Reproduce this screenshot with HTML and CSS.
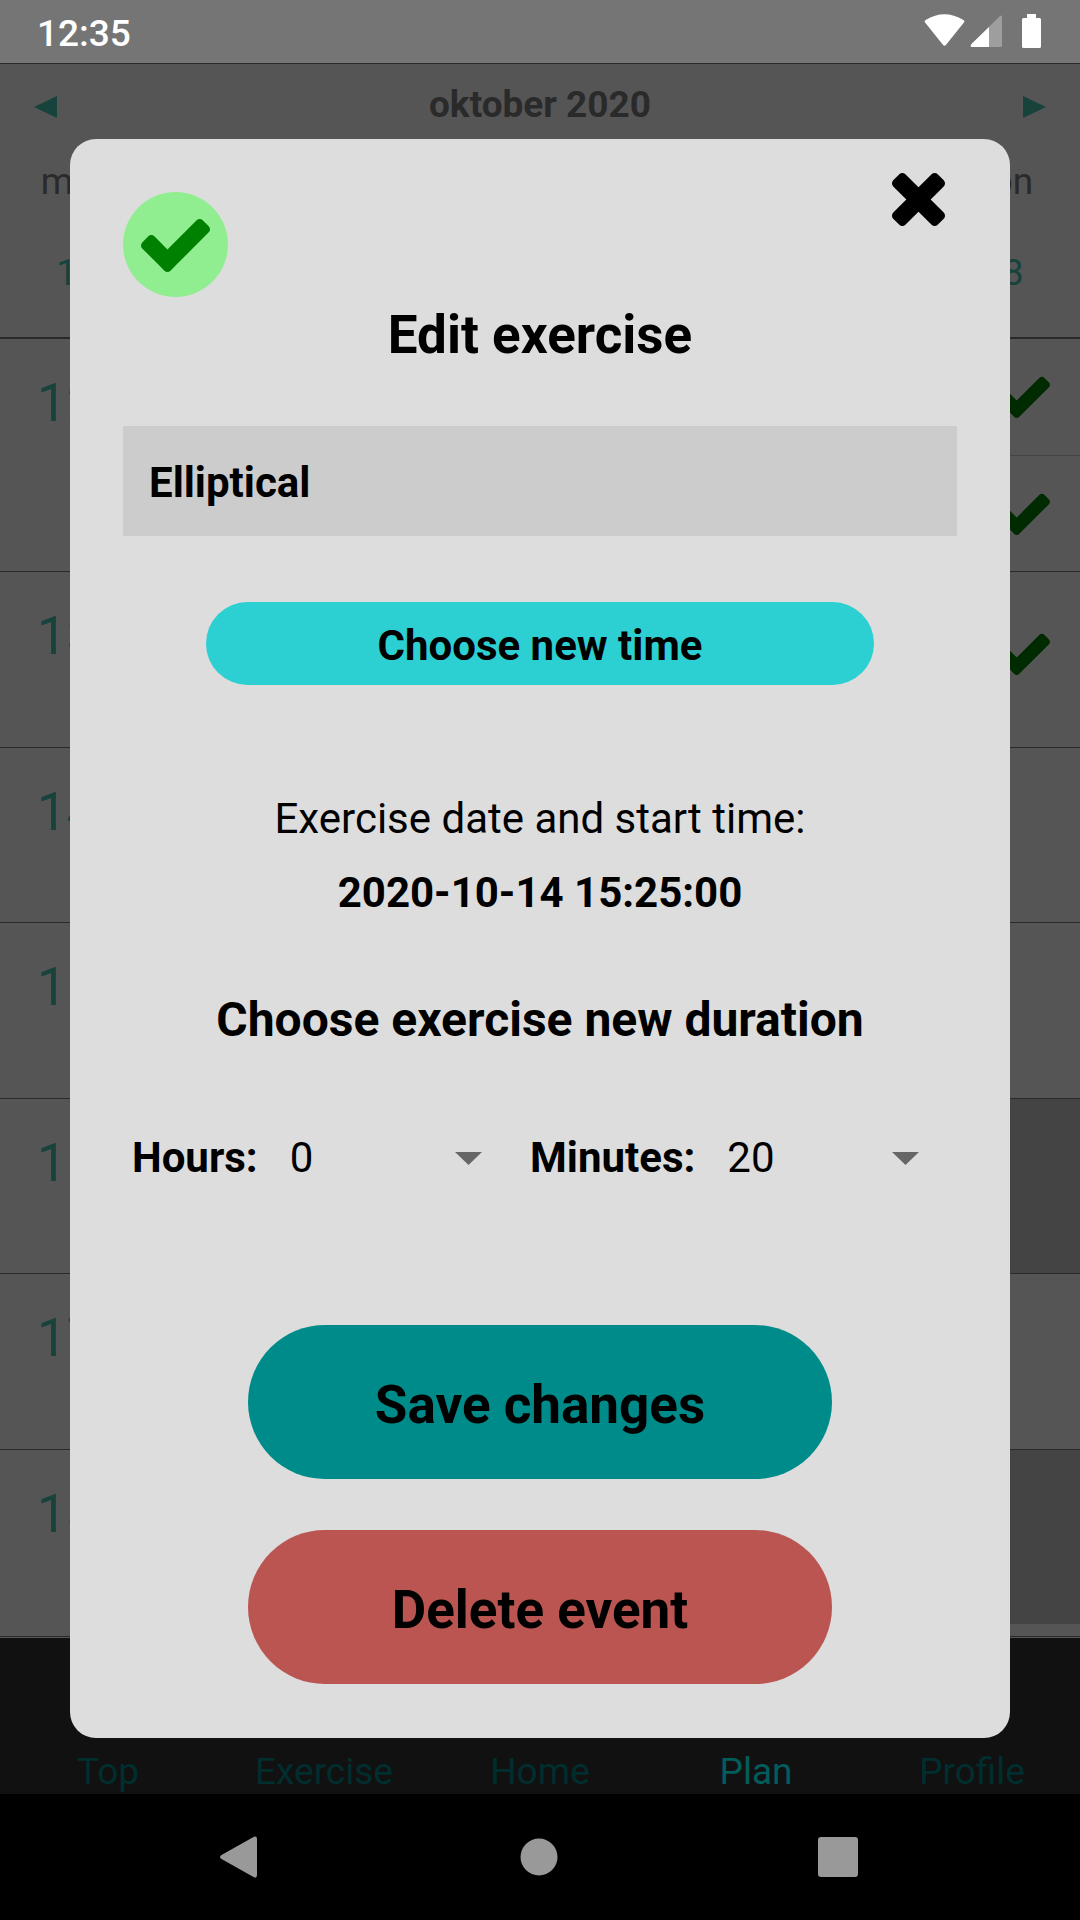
FILE: index.html
```html
<!DOCTYPE html>
<html lang="en">
<head>
<meta charset="utf-8">
<meta name="viewport" content="width=device-width, initial-scale=1">
<title>Edit exercise</title>
<link rel="stylesheet" href="styles.css">
</head>
<body>
<svg class="defs" aria-hidden="true">
  <symbol id="check" viewBox="121 314 1550 1208"><path d="M1671 566q0 40-28 68l-724 724-136 136q-28 28-68 28t-68-28l-136-136-362-362q-28-28-28-68t28-68l136-136q28-28 68-28t68 28l294 295 656-657q28-28 68-28t68 28l136 136q28 28 28 68z"/></symbol>
</svg>

<header class="status">
  <span>12:35</span>
  <svg width="117" height="34" viewBox="0 0 117 34" fill="#fff" aria-hidden="true">
    <path d="M1.500 9Q-.3 7.300 1.600 6Q20.500-5.500 39.400 6Q41.300 7.300 39.500 9L22.300 30.600Q20.500 33 18.700 30.600Z"/>
    <path d="M74.500 3.500Q78-.3 78 3.500V31.500Q78 33 76.500 33H48Q45.500 32.500 47.500 30Z" fill-opacity=".3"/>
    <path d="M65 13V33H48Q45.500 32.500 47.500 30Z"/>
    <path d="M103 0H112V4H115.500Q117 4 117 5.500V32.500Q117 34 115.500 34H99.500Q98 34 98 32.500V5.500Q98 4 99.500 4H103Z"/>
  </svg>
</header>

<main class="plan">
  <section class="calendar">
    <div class="month">
      <button class="step" aria-label="Previous month"><svg width="23" height="22" viewBox="0 0 23 22"><path d="M0 11 23 0V22Z"/></svg></button>
      <h2 class="month-name">oktober 2020</h2>
      <button class="step" aria-label="Next month"><svg width="23" height="22" viewBox="0 0 23 22"><path d="M23 11 0 0V22Z"/></svg></button>
    </div>
    <div class="week names"><span>mån</span><span>tis</span><span>ons</span><span>tor</span><span>fre</span><span>lör</span><span>sön</span></div>
    <div class="week dates"><span>12</span><span>13</span><span>14</span><span>15</span><span>16</span><span>17</span><span>18</span></div>
  </section>
  <section class="agenda">
    <div class="day busy"><span class="number">12</span>
      <div class="events">
        <div class="event"><svg class="done"><use href="#check"/></svg></div>
        <div class="event"><svg class="done"><use href="#check"/></svg></div>
      </div>
    </div>
    <div class="day"><span class="number">13</span>
      <div class="events"><div class="event"><svg class="done"><use href="#check"/></svg></div></div>
    </div>
    <div class="day"><span class="number">14</span><div class="events"></div></div>
    <div class="day"><span class="number">15</span><div class="events"></div></div>
    <div class="day"><span class="number">16</span><div class="events free"></div></div>
    <div class="day"><span class="number">17</span><div class="events"></div></div>
    <div class="day"><span class="number">18</span><div class="events free"></div></div>
  </section>
</main>

<nav class="tabs">
  <a href="#top">Top</a>
  <a href="#exercise">Exercise</a>
  <a href="#home">Home</a>
  <a href="#plan" class="current">Plan</a>
  <a href="#profile">Profile</a>
</nav>

<footer class="system">
  <button aria-label="Back"><svg width="40" height="42" viewBox="0 0 40 42"><path d="M33.500 1Q37 -1 37 3.500V38.500Q37 43 33.500 41L1.500 23Q-1.500 21 1.500 19Z"/></svg></button>
  <button aria-label="Home"><svg width="40" height="42" viewBox="0 0 40 42"><circle cx="20" cy="21" r="18.500"/></svg></button>
  <button aria-label="Overview"><svg width="40" height="42" viewBox="0 0 40 42"><rect y="1" width="40" height="40" rx="3"/></svg></button>
</footer>

<form class="modal" role="dialog" aria-labelledby="title">
  <div class="modal-top">
    <button type="button" class="complete" aria-label="Mark as done"><svg width="69" height="54"><use href="#check"/></svg></button>
    <button type="button" class="close" aria-label="Close"><svg width="53" height="53" viewBox="302 366 1188 1188"><path d="M1490 1322q0 40-28 68l-136 136q-28 28-68 28t-68-28l-294-294-294 294q-28 28-68 28t-68-28l-136-136q-28-28-28-68t28-68l294-294-294-294q-28-28-28-68t28-68l136-136q28-28 68-28t68 28l294 294 294-294q28-28 68-28t68 28l136 136q28 28 28 68t-28 68l-294 294 294 294q28 28 28 68z"/></svg></button>
  </div>
  <h1 class="title" id="title">Edit exercise</h1>
  <input class="name" type="text" value="Elliptical" aria-label="Exercise name">
  <button type="button" class="pill choose">Choose new time</button>
  <p class="when">Exercise date and start time:</p>
  <p class="stamp">2020-10-14 15:25:00</p>
  <h2 class="subtitle">Choose exercise new duration</h2>
  <div class="duration">
    <div class="field">
      <label for="hours">Hours:</label>
      <div class="picker">
        <select id="hours"><option>0</option><option>1</option><option>2</option></select>
        <svg width="27" height="13" viewBox="0 0 27 13" aria-hidden="true"><path d="M0 0H27L13.500 13Z"/></svg>
      </div>
    </div>
    <div class="field">
      <label for="minutes">Minutes:</label>
      <div class="picker">
        <select id="minutes"><option>20</option><option>30</option><option>40</option></select>
        <svg width="27" height="13" viewBox="0 0 27 13" aria-hidden="true"><path d="M0 0H27L13.500 13Z"/></svg>
      </div>
    </div>
  </div>
  <div class="actions">
    <button type="submit" class="pill save">Save changes</button>
    <button type="button" class="pill delete">Delete event</button>
  </div>
</form>
</body>
</html>
```
FILE: styles.css
```css
* { box-sizing: border-box; }

body {
  margin: 0;
  min-height: 100vh;
  display: flex;
  flex-direction: column;
  position: relative;
  background: #555;
  color: #000;
  font-family: Roboto, sans-serif;
}

h1, h2, p { margin: 0; }

button, input, select {
  margin: 0;
  padding: 0;
  border: 0;
  background: none;
  color: inherit;
  font: inherit;
}

svg { display: block; }

.defs { position: absolute; width: 0; height: 0; }

/* Status bar */
.status {
  display: flex;
  justify-content: space-between;
  align-items: center;
  height: 64px;
  padding: 0 39px 2px 37px;
  background: #757575;
  border-bottom: 1px solid #2a2a2a;
  color: #fff;
  font-size: 37px;
  font-weight: 500;
  line-height: 44px;
}

.status span { padding-top: 6px; }

/* Calendar behind the dialog */
.plan {
  flex: 1;
  display: flex;
  flex-direction: column;
}

.calendar {
  padding: 19px 0 42px;
  border-bottom: 2px solid #2a2a2a;
  color: #2a2a2a;
  font-size: 37px;
  line-height: 44px;
}

.month {
  display: flex;
  justify-content: space-between;
  align-items: center;
  padding: 0 34px;
}

.month-name { font-size: 37px; font-weight: 700; }

.step { padding-top: 3px; }
.step svg { fill: #18423c; }

.week {
  display: grid;
  grid-template-columns: repeat(7, 1fr);
  text-align: center;
}

.names { margin-top: 33px; }
.dates { margin-top: 47px; color: #18423c; }

.agenda {
  flex: 1;
  display: flex;
  flex-direction: column;
  margin-bottom: 1px;
  padding-bottom: 10px;
  border-bottom: 1px solid #2a2a2a;
}

.day {
  flex: 1 1 0;
  display: flex;
  border-bottom: 1px solid #2a2a2a;
}

.day:last-child { border-bottom: 2px solid #555; }

.busy { flex: none; }

.number {
  width: 140px;
  padding: 33px 0 0 37px;
  color: #18423c;
  font-size: 53px;
  line-height: 62px;
}

.events {
  flex: 1;
  display: flex;
  flex-direction: column;
  justify-content: center;
}

.day:not(.busy) .events { padding-bottom: 10px; }

.free { background: #444; }

.event {
  display: flex;
  justify-content: flex-end;
  align-items: center;
  height: 116px;
  padding-right: 30px;
}

.event + .event { border-top: 1px solid #444; }

.done { width: 54px; height: 42px; fill: #002a00; }

/* App tabs */
.tabs {
  display: grid;
  grid-template-columns: repeat(5, 1fr);
  align-items: end;
  height: 156px;
  background: #111;
  font-size: 37px;
  line-height: 44px;
  text-align: center;
}

.tabs a { color: #002e2e; text-decoration: none; }
.tabs .current { color: #005d5b; }

/* System navigation */
.system {
  display: flex;
  justify-content: center;
  align-items: center;
  gap: 259px;
  height: 126px;
  padding-right: 2px;
  background: #000;
}

.system svg { fill: #999; }

/* Dialog */
.modal {
  position: absolute;
  top: 139px;
  left: 70px;
  right: 70px;
  display: flex;
  flex-direction: column;
  padding: 21px 53px 54px;
  border-radius: 26px;
  background: #ddd;
  font-size: 42px;
  line-height: 50px;
  text-align: center;
}

.modal-top {
  display: flex;
  justify-content: space-between;
  align-items: flex-start;
}

.complete {
  display: flex;
  justify-content: center;
  align-items: center;
  width: 105px;
  height: 105px;
  margin-top: 32px;
  border-radius: 50%;
  background: #90ee90;
  fill: green;
}

.close { padding: 13px 12px; }

.title {
  margin-top: 7px;
  font-size: 53px;
  font-weight: 700;
  line-height: 62px;
}

.name {
  width: 100%;
  height: 110px;
  margin-top: 60px;
  padding: 2px 26px 0;
  background: #ccc;
  font-weight: 700;
}

.pill {
  padding-top: 4px;
  border-radius: 80px;
  font-weight: 700;
}

.choose {
  align-self: center;
  width: 80%;
  height: 83px;
  margin-top: 66px;
  background: #2cd0d2;
}

.when { margin-top: 109px; }

.stamp { margin-top: 24px; font-weight: 700; }

.subtitle {
  margin-top: 74px;
  font-size: 48px;
  font-weight: 700;
  line-height: 56px;
}

.duration {
  display: grid;
  grid-template-columns: 9fr 10fr;
  gap: 48px;
  margin-top: 85px;
  padding: 0 38px 0 9px;
  text-align: left;
}

.field { display: flex; gap: 32px; }
.field label { font-weight: 700; }

.picker {
  flex: 1;
  display: grid;
  align-items: center;
}

.picker select, .picker svg { grid-area: 1 / 1; }
.picker select { width: 100%; height: 50px; appearance: none; }
.picker svg { justify-self: end; fill: #666; pointer-events: none; }

.actions {
  align-self: center;
  display: flex;
  flex-direction: column;
  gap: 51px;
  width: 70%;
  margin-top: 142px;
}

.actions .pill {
  height: 154px;
  padding-top: 6px;
  font-size: 53px;
  line-height: 62px;
}

.save { background: #008b8b; }
.delete { background: #bb5552; }
```
